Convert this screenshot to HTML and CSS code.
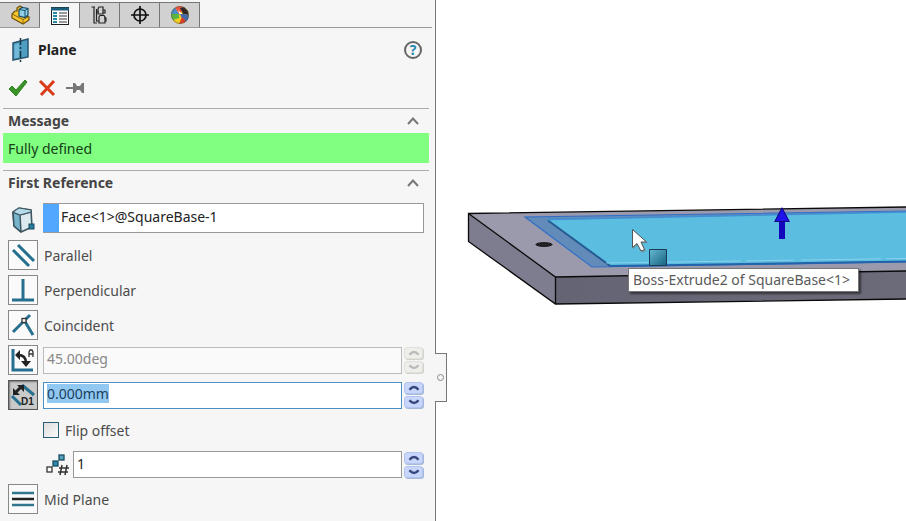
FILE: index.html
```html
<!DOCTYPE html>
<html lang="en">
<head>
  <meta charset="UTF-8">
  <meta name="viewport" content="width=device-width, initial-scale=1.0">
  <title>Plane</title>
  <link rel="stylesheet" href="styles.css">
</head>
<body>
  <!-- shared chevrons -->
  <svg class="defs" aria-hidden="true">
    <symbol id="collapse" viewBox="0 0 12 8"><path d="M1 7 6 1.500 11 7" fill="none" stroke="#777" stroke-width="2"/></symbol>
    <symbol id="up" viewBox="0 0 12 6"><path d="M1.500 4.800Q6 -.8 10.500 4.800" fill="none" stroke="currentColor" stroke-width="2.400"/></symbol>
    <symbol id="down" viewBox="0 0 12 6"><path d="M1.500 1.200Q6 6.800 10.500 1.200" fill="none" stroke="currentColor" stroke-width="2.400"/></symbol>
  </svg>

  <aside class="panel">
    <nav class="tabs">
      <button class="tab" aria-label="Feature tree">
        <svg width="20" height="20" viewBox="0 0 20 20"><path d="M2 9 5 6 7 6 7 3 10 1 12 2 12 9 19 12V15L13 19 2 13Z" fill="#f6c62c" stroke="#6b4d0c" stroke-width="1.200"/><path d="M2 9 13 14.500 19 11.500M13 14.500V19" fill="none" stroke="#8a6410"/><path d="M9 4.500 12 2.500 18 3.500V10L15 12.500 9 11Z" fill="#8fd0e8" stroke="#174f69" stroke-width="1.200"/><path d="M9 4.500 15 5.500 18 3.500M15 5.500V12.500" fill="none" stroke="#174f69"/></svg>
      </button>
      <button class="tab active" aria-label="Property manager">
        <svg width="20" height="20" viewBox="0 0 20 20"><rect x="1.500" y="1.500" width="17" height="17" fill="#fff" stroke="#222"/><path d="M1 3H19" stroke="#1c5f7c" stroke-width="3"/><path d="M3 7H7M3 10H7M3 13H7M3 16H7" stroke="#2687a8" stroke-width="2"/><path d="M9 7H17M9 10H17M9 13H17M9 16H17" stroke="#333"/></svg>
      </button>
      <button class="tab" aria-label="Configurations">
        <svg width="20" height="20" viewBox="0 0 20 20" fill="none" stroke="#222" stroke-width="1.200"><path d="M4 2V18M6.500 4V16.500M1.500 2H5M3.500 18H7M6.500 7H9M6.500 16H9"/><path d="M8 4 9 2H13V9H8Z"/><path d="M9 12 10 10.500H14L15 12V18H9Z"/><path d="M13 5H15V8H13M14 13H16V16H15"/></svg>
      </button>
      <button class="tab" aria-label="Dimensions">
        <svg width="20" height="20" viewBox="0 0 20 20" fill="none" stroke="#111" stroke-width="1.700"><circle cx="10" cy="10" r="6"/><path d="M10 1V19M1 10H19"/></svg>
      </button>
      <button class="tab" aria-label="Display">
        <svg width="20" height="20" viewBox="0 0 20 20"><circle cx="10" cy="10" r="9" fill="#f3ce22"/><path d="M10 10 1 9A9 9 0 0 1 5 2.500Z" fill="#4a8cc4"/><path d="M10 10 5 2.500A9 9 0 0 1 13 1.500Z" fill="#ef5441"/><path d="M10 3 14 2 18 6 18.500 10 13 9Z" fill="#342527"/><path d="M10 10 8 5 13 10Z" fill="#fff"/><path d="M10 9 13 9 18.900 10A9 9 0 0 1 14 18Z" fill="#4269ae"/><path d="M1 9 9 9 9 13 3 15A9 9 0 0 1 1 9Z" fill="#58b53d"/><path d="M12 12 16 16A9 9 0 0 1 9 19Z" fill="#de3d24"/><circle cx="10" cy="10" r="8.500" fill="none" stroke="#555" stroke-opacity=".6"/></svg>
      </button>
    </nav>

    <header class="title">
      <svg width="20" height="24" viewBox="0 0 20 24"><path d="M2 5 17 1V19L2 22Z" fill="#4e9dc2" stroke="#27566d" stroke-width="1.500"/><path d="M3.500 6.500 8 5.500V19.500L3.500 20.500Z" fill="#71b9d7"/><path d="M9.500 0V24" stroke="#173846" stroke-width="1.500" stroke-dasharray="7 2 2 2"/></svg>
      <h1>Plane</h1>
      <button class="icon-btn help" aria-label="Help">?</button>
    </header>

    <div class="actions">
      <button class="icon-btn" aria-label="OK"><svg width="20" height="18" viewBox="0 0 20 18"><path d="M1 10 4 7 8 11 17 1 19 3 8 17Z" fill="#399329" stroke="#2f8421"/></svg></button>
      <button class="icon-btn" aria-label="Cancel"><svg width="20" height="18" viewBox="0 0 20 18"><path d="M3 2 17 16M17 2 4 16" stroke="#da3a18" stroke-width="3"/></svg></button>
      <button class="icon-btn" aria-label="Keep visible"><svg width="20" height="18" viewBox="0 0 20 18"><path d="M0 9H8" stroke="#777" stroke-width="2"/><path d="M7 4H9L11 7H14L16 4H18V14H16L14 11H11L9 14H7Z" fill="#777"/></svg></button>
    </div>

    <section class="group">
      <h2>Message <button class="icon-btn" aria-label="Collapse message"><svg width="12" height="8"><use href="#collapse"/></svg></button></h2>
      <p class="message">Fully defined</p>
    </section>

    <section class="group">
      <h2>First Reference <button class="icon-btn" aria-label="Collapse first reference"><svg width="12" height="8"><use href="#collapse"/></svg></button></h2>
      <div class="fields">
        <div class="row face">
          <label class="row-icon" for="face">
            <svg width="24" height="26" viewBox="0 0 24 26"><path d="M2 5 8 1 20 3 21 20 10 25 3 19Z" fill="#dceaf0" stroke="#3e5661" stroke-width="1.600"/><path d="M2 5 9 8 10 25 3 19Z" fill="#78b4cc"/><path d="M2 5 9 8 20 5M9 8 10 25M2 5 3 19 10 25" fill="none" stroke="#3e5661" stroke-width="1.500"/><path d="M8 1 20 3V5L9 8 2 5Z" fill="#b3dbe8" stroke="#3e5661"/><rect x="18" y="17" width="5" height="5" fill="#287b9c" stroke="#194a5e"/></svg>
          </label>
          <div class="selection"><input id="face" type="text" value="Face&lt;1&gt;@SquareBase-1"></div>
        </div>
        <div class="row">
          <button class="tool" id="parallel" aria-label="Parallel"><svg width="28" height="28" viewBox="0 0 28 28" stroke="#266f8f" stroke-width="3"><path d="M9 4 25 20M4 9 20 25"/></svg></button>
          <label for="parallel">Parallel</label>
        </div>
        <div class="row">
          <button class="tool" id="perpendicular" aria-label="Perpendicular"><svg width="28" height="28" viewBox="0 0 28 28" stroke="#266f8f" stroke-width="3"><path d="M14 3V24M3 24H25"/></svg></button>
          <label for="perpendicular">Perpendicular</label>
        </div>
        <div class="row">
          <button class="tool" id="coincident" aria-label="Coincident"><svg width="28" height="28" viewBox="0 0 28 28" fill="none" stroke="#266f8f" stroke-width="3"><path d="M4 21 21 4M15 9 24 24"/><rect x="13" y="7.500" width="4" height="4" fill="#fff" stroke="#333" stroke-width="1.300"/></svg></button>
          <label for="coincident">Coincident</label>
        </div>
        <div class="row">
          <button class="tool" aria-label="At angle"><svg width="28" height="28" viewBox="0 0 28 28" fill="none"><path d="M4 3V24H24" stroke="#266f8f" stroke-width="3"/><path d="M9 9Q17 9 17 17" stroke="#222" stroke-width="2.500"/><path d="M6 9 11 4V14ZM12 15H22L17 21Z" fill="#222"/><path d="M20 11V6L21 4H23L24 6V11M20 8H24" stroke="#333" stroke-width="1.300"/></svg></button>
          <input type="text" value="45.00deg" aria-label="Angle" disabled>
          <div class="spin off">
            <button aria-label="Increase angle" disabled><svg width="12" height="6"><use href="#up"/></svg></button>
            <button aria-label="Decrease angle" disabled><svg width="12" height="6"><use href="#down"/></svg></button>
          </div>
        </div>
        <div class="row">
          <button class="tool pressed" aria-label="Offset distance"><svg width="28" height="28" viewBox="0 0 28 28" fill="none"><path d="M3 15 12 24M13 4 25 14" stroke="#266f8f" stroke-width="3"/><path d="M6 12 12 6" stroke="#222" stroke-width="3"/><path d="M4 7V14H11ZM8 4H15V11Z" fill="#222"/><text x="12" y="24" class="badge">D1</text></svg></button>
          <input class="focus" type="text" value="0.000mm" aria-label="Offset distance" id="offset">
          <div class="spin">
            <button aria-label="Increase offset"><svg width="12" height="6"><use href="#up"/></svg></button>
            <button aria-label="Decrease offset"><svg width="12" height="6"><use href="#down"/></svg></button>
          </div>
        </div>
        <div class="row indent">
          <input type="checkbox" id="flip">
          <label for="flip">Flip offset</label>
        </div>
        <div class="row indent count">
          <label class="count-icon" for="count"><svg width="26" height="24" viewBox="0 0 26 24"><rect x="4" y="14" width="5" height="5" fill="#fff" stroke="#333" stroke-width="1.300"/><rect x="10" y="8" width="5" height="5" fill="#2e88a8" stroke="#174c63" stroke-width="1.300"/><rect x="16" y="2" width="5" height="5" fill="#55a3bd" stroke="#174c63" stroke-width="1.300"/><path d="M19 12 17 22M24 12 22 22M16 15H26M15 19H25" stroke="#333" stroke-width="1.500"/></svg></label>
          <input type="text" value="1" id="count">
          <div class="spin">
            <button aria-label="More planes"><svg width="12" height="6"><use href="#up"/></svg></button>
            <button aria-label="Fewer planes"><svg width="12" height="6"><use href="#down"/></svg></button>
          </div>
        </div>
        <div class="row">
          <button class="tool" id="mid" aria-label="Mid Plane"><svg width="28" height="28" viewBox="0 0 28 28" stroke-width="2.500"><path d="M3 8H25M3 20H25" stroke="#32758f"/><path d="M3 14H25" stroke="#222"/></svg></button>
          <label for="mid">Mid Plane</label>
        </div>
      </div>
    </section>
    <button class="flyout" aria-label="Hide panel"></button>
  </aside>

  <main class="viewport">
    <svg class="model" viewBox="436 0 470 521" preserveAspectRatio="xMinYMin slice">
      <defs>
        <linearGradient id="handle" x2="1" y2="1"><stop stop-color="#65b8d3"/><stop offset="1" stop-color="#17627f"/></linearGradient>
        <linearGradient id="front" x2="1" y2="0"><stop stop-color="#646474"/><stop offset="1" stop-color="#6c6b7a"/></linearGradient>
      </defs>
      <path d="M468.500 213.500 906 207V271L555.500 277Z" fill="#9b9aad"/>
      <path d="M468.500 213.500 555.500 277V304L468.500 241.500Z" fill="#7e7d8f"/>
      <path d="M555.500 277 906 271V299L555.500 304Z" fill="url(#front)"/>
      <path d="M906 207 468.500 213.500V241.500L555.500 304 906 299M468.500 213.500 555.500 277 906 271M555.500 277V304" fill="none" stroke="#090909" stroke-width="1.300"/>
      <path d="M906 211 525 217 592 267 906 262Z" fill="#638bb9" stroke="#316fc6" stroke-width="1.200"/>
      <path d="M906 212 547 220 611 266 906 261Z" fill="#5bbddf"/>
      <path d="M548 220.500 611 266.500" stroke="#245b92" stroke-width="2"/>
      <path d="M547 219.500 906 212" stroke="#438fd4" stroke-width="1.500"/>
      <path d="M606 263 906 258.500" stroke="#8ad0ef" stroke-dasharray="48 7 80 5"/>
      <path d="M610 266 906 261.500" stroke="#2363aa" stroke-width="2"/>
      <ellipse cx="544" cy="244.500" rx="8" ry="1.800" fill="#24242a" stroke="#0b0b0b"/>
      <path d="M649.500 249.500H666.500V265.500H649.500Z" fill="url(#handle)" stroke="#153b55"/>
      <path d="M779 239V222H774L782 207 790 222H785V239Z" fill="#1207bd"/>
      <path d="M782 208 775 221.500H789Z" fill="#1f12ed" stroke="#130980"/>
      <path d="M632 229V248L637 244 641 252 645 250 641 242H647Z" fill="#777" opacity=".5" transform="translate(1 1)"/>
      <path d="M632.500 229.500V247.500L637 243.500 641 251 644.500 249.500 641 242H646.500Z" fill="#fff" stroke="#555"/>
    </svg>
    <div class="tooltip">Boss-Extrude2 of SquareBase&lt;1&gt;</div>
  </main>
  <script>
    document.getElementById("offset").focus();
    document.getElementById("offset").select();
  </script>
</body>
</html>
```
FILE: styles.css
```css
* {
  box-sizing: border-box;
}

body, h1, h2, p, button, input {
  margin: 0;
  padding: 0;
}

body {
  display: flex;
  min-height: 100vh;
  font-family: "Noto Sans", "Open Sans", sans-serif;
  font-size: 14px;
  line-height: 20px;
  color: #4c4c4c;
  background: #fff;
}

button, input {
  font: inherit;
  color: inherit;
}

svg {
  display: block;
}

.defs {
  position: absolute;
  width: 0;
  height: 0;
}

/* Panel */
.panel {
  position: relative;
  flex: none;
  width: 436px;
  padding-top: 2px;
  background: #f6f6f6;
  border-right: 1px solid #777;
}

.tabs {
  display: flex;
  margin-right: 3px;
  border-bottom: 1px solid #999;
}

.tab {
  display: flex;
  align-items: center;
  justify-content: center;
  width: 40px;
  height: 25px;
  background: #d1d1d1;
  border: solid #777;
  border-width: 1px 1px 0 0;
}

.tab.active {
  height: 26px;
  margin-bottom: -1px;
  background: #f6f6f6;
}

.title {
  display: flex;
  align-items: center;
  gap: 7px;
  height: 44px;
  padding: 0 13px 0 11px;
}

.title h1 {
  font-size: 14px;
  line-height: 20px;
  color: #222;
}

.icon-btn {
  display: flex;
  align-items: center;
  justify-content: center;
  background: none;
  border: 0;
}

.help {
  width: 18px;
  height: 18px;
  margin-left: auto;
  border: 2px solid #666;
  border-radius: 50%;
  font-weight: bold;
  color: #2688b0;
}

.actions {
  display: flex;
  align-items: center;
  gap: 9px;
  height: 36px;
  padding: 0 8px 4px;
}

/* Groups */
.group {
  margin: 0 6px 7px 3px;
  border-top: 1px solid #aaa;
}

.group h2 {
  display: flex;
  align-items: center;
  justify-content: space-between;
  height: 24px;
  padding: 0 10px 0 5px;
  font-size: 14px;
  color: #444;
}

.message {
  padding: 6px 5px 4px;
  color: #164016;
  background: #80ff80;
}

.fields {
  display: flex;
  flex-direction: column;
  gap: 5px;
  padding: 8px 5px 0;
}

/* Rows */
.row {
  display: flex;
  align-items: center;
  gap: 5px;
  height: 30px;
}

.row.face {
  margin-bottom: 2px;
}

.row label {
  padding: 2px 0 0 1px;
}

.row .row-icon {
  width: 30px;
  padding: 4px 0 0 3px;
}

.row input[type="text"] {
  flex: 1;
  min-width: 0;
  height: 27px;
  padding: 0 3px 3px;
  color: #222;
  background: #fff;
  border: 1px solid #999;
  outline: none;
}

.row input[type="text"]:disabled {
  color: #888;
  background: #fafafa;
  border-color: #bbb;
}

.row .focus[type="text"] {
  border-color: #4a90c4;
}

.focus::selection {
  color: #1c3f5c;
  background: #91c8f2;
}

.selection {
  display: flex;
  flex: 1;
  height: 30px;
  background: #fff;
  border: 1px solid #999;
  border-left: 0;
}

.selection::before {
  content: "";
  width: 16px;
  background: #52a8ff;
}

.row .selection input[type="text"] {
  height: 28px;
  padding: 0 2px 3px;
  border: 0;
}

.tool {
  display: flex;
  width: 30px;
  height: 30px;
  background: #fafafa;
  border: 1px solid #888;
}

.tool.pressed {
  background: #cacaca;
  border-color: #555;
  box-shadow: inset 1px 1px 2px #777;
}

.badge {
  font: bold 10px "Liberation Sans", sans-serif;
  fill: #222;
}

.indent {
  padding-left: 35px;
}

.row.count {
  height: 29px;
}

.row .count-icon {
  width: 25px;
  padding: 0;
}

input[type="checkbox"] {
  appearance: none;
  width: 16px;
  height: 16px;
  background: linear-gradient(135deg, #ddd, #fafafa);
  border: 1px solid #2a5f78;
}

/* Spinners */
.spin {
  display: flex;
  flex-direction: column;
  gap: 2px;
  width: 20px;
  margin-left: -3px;
}

.spin button {
  display: flex;
  align-items: center;
  justify-content: center;
  width: 19px;
  height: 12px;
  color: #34467c;
  background: #c8d6fb;
  border: 1px solid #b1c3ee;
  border-radius: 3px;
  box-shadow: 1px 1px 0 #a4bad8;
}

.spin.off button {
  color: #bbb;
  background: #eeeeea;
  border-color: #e1e1dc;
  box-shadow: 1px 1px 0 #d2d2cc;
}

/* Tab that hides the panel, sits over its right edge */
.flyout {
  position: absolute;
  top: 353px;
  left: 100%;
  width: 12px;
  height: 49px;
  background: #f6f6f6;
  border: 1px solid #777;
  border-left: 0;
  box-shadow: -1px 0 0 #f6f6f6;
  z-index: 1;
}

.flyout::before {
  content: "";
  display: block;
  width: 5px;
  height: 5px;
  margin-left: 2px;
  border: 1px solid #888;
  border-radius: 50%;
}

/* Graphics area */
.viewport {
  position: relative;
  flex: 1;
  overflow: hidden;
}

.model {
  position: absolute;
  inset: 0;
  width: 100%;
  height: 100%;
}

.tooltip {
  position: absolute;
  top: 268px;
  left: 192px;
  padding: 1px 8px 1px 4px;
  white-space: nowrap;
  color: #5a5a5a;
  background: #fff;
  border: 1px solid #777;
  box-shadow: 2px 2px 2px rgba(0, 0, 0, 0.5);
}
```
